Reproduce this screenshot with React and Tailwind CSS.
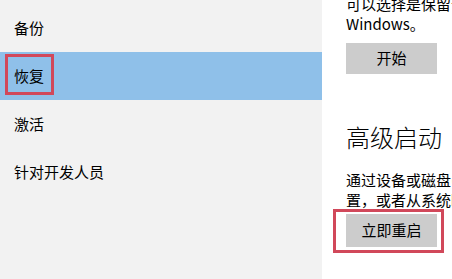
import React from "react";

const navItems = ["备份", "恢复", "激活", "针对开发人员"];

function Sidebar() {
  return (
    <div className="w-[322px] shrink-0 bg-[#f2f2f2] pt-[4px]">
      {navItems.map((item, index) => (
        <div
          key={item}
          className={
            index === 1
              ? "relative flex h-[48px] items-center bg-[#8fc0e9] pl-[14px]"
              : "flex h-[48px] items-center pl-[14px]"
          }
        >
          <span className="text-[15px] leading-[20px] text-black">{item}</span>
          {index === 1 && (
            <span className="absolute left-[5px] top-[2px] h-[41px] w-[49px] border-[3px] border-[#d1485a]" />
          )}
        </div>
      ))}
    </div>
  );
}

function Content() {
  return (
    <div className="flex flex-1 flex-col bg-white pl-[24px] text-black">
      <div className="-mt-[6px] whitespace-nowrap text-[15px] leading-[20px]">
        <p>可以选择是保留个人文件还是将其删除，然后重新安装</p>
        <p>Windows。</p>
      </div>
      <button className="mt-[9px] h-[31px] w-[91px] bg-[#cccccc] text-[15px]">
        开始
      </button>

      <h2 className="mt-[47px] whitespace-nowrap text-[24px] font-light leading-[32px]">
        高级启动
      </h2>
      <div className="mt-[17px] whitespace-nowrap text-[15px] leading-[20px]">
        <p>通过设备或磁盘(如 U 盘或 DVD)启动，更改固件设</p>
        <p>置，或者从系统映像还原 Windows。这将重新启动电脑。</p>
      </div>
      <div className="relative mt-[4px] w-[91px]">
        <button className="h-[33px] w-[91px] bg-[#cccccc] text-[15px]">
          立即重启
        </button>
        <span className="absolute -left-[13px] -right-[7px] -top-[5px] -bottom-[6px] border-[3px] border-[#d1485a]" />
      </div>
    </div>
  );
}

export default function App() {
  return (
    <div
      className="flex h-[279px] w-[452px] overflow-hidden bg-white"
      style={{ fontFamily: '"Noto Sans CJK SC", "Noto Sans", sans-serif' }}
    >
      <Sidebar />
      <Content />
    </div>
  );
}
